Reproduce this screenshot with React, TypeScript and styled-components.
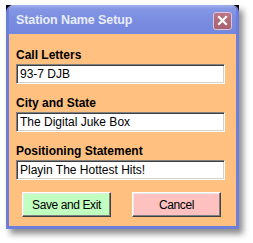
import React from "react";
import styled, { createGlobalStyle } from "styled-components";

const Global = createGlobalStyle`
  html, body { margin: 0; padding: 0; background: #ffffff; }
  body { font-family: "Liberation Sans", Arial, sans-serif; }
`;

const Page = styled.div`
  padding: 5px 0 0 6px;
  width: 253px;
  height: 243px;
  box-sizing: border-box;
`;

const Window = styled.div`
  width: 233px;
  background: linear-gradient(#000 0, #000 10px, transparent 10px);
  box-shadow: 4px 5px 6px rgba(0, 0, 0, 0.45);
`;

const Frame = styled.div`
  border: 3px solid #6c7fda;
  border-top: none;
  border-radius: 7px 7px 0 0;
  overflow: hidden;
  background: #ffc080;
`;

const TitleBar = styled.div`
  height: 29px;
  margin: 0 -3px;
  padding: 0 7px 0 10px;
  display: flex;
  align-items: center;
  justify-content: space-between;
  background: linear-gradient(#a3b0ef 0px, #8496e4 4px, #7b8de0 14px, #7487de 29px);
  border-radius: 7px 7px 0 0;
`;

const Title = styled.span`
  font-weight: bold;
  font-size: 12.5px;
  color: #e8ecfa;
  letter-spacing: -0.1px;
  margin-top: 1px;
`;

const CloseButton = styled.div`
  width: 17px;
  height: 16px;
  margin-top: 2px;
  border: 1px solid #d9c6dc;
  border-radius: 3px;
  background: linear-gradient(#bb7586, #a9606f);
  display: flex;
  align-items: center;
  justify-content: center;
`;

const Body = styled.div`
  padding: 14px 8px 9px 7px;
  display: flex;
  flex-direction: column;
`;

const Field = styled.div<{ $gap: number }>`
  display: flex;
  flex-direction: column;
  gap: 2px;
  margin-bottom: ${(p) => p.$gap}px;
`;

const Label = styled.div`
  font-weight: bold;
  font-size: 12px;
  line-height: 14px;
  color: #000;
`;

const Input = styled.div`
  width: 209px;
  height: 20px;
  box-sizing: border-box;
  border-style: solid;
  border-width: 1px;
  border-color: #808080 #ffffff #ffffff #808080;
  box-shadow: inset 1px 1px 0 #404040, inset -1px -1px 0 #d4d0c8;
  background: #fff;
  font-size: 12px;
  color: #000;
  padding-left: 3px;
  display: flex;
  align-items: center;
`;

const ButtonRow = styled.div`
  display: flex;
  gap: 21px;
  padding-left: 6px;
`;

const Button = styled.div<{ $bg: string }>`
  width: 89px;
  height: 25px;
  box-sizing: border-box;
  background: ${(p) => p.$bg};
  border-style: solid;
  border-width: 1px;
  border-color: #ffffff #404040 #404040 #ffffff;
  box-shadow: inset -1px -1px 0 #808080, inset 1px 1px 0 #e8e8e8;
  display: flex;
  align-items: center;
  justify-content: center;
  font-size: 12px;
  letter-spacing: -0.4px;
  color: #000;
`;

export default function App() {
  return (
    <Page>
      <Global />
      <Window>
        <Frame>
          <TitleBar>
            <Title>Station Name Setup</Title>
            <CloseButton>
              <svg width="11" height="11" viewBox="0 0 11 11">
                <path d="M2 2 L9 9 M9 2 L2 9" stroke="#fff" strokeWidth="2.2" strokeLinecap="square" />
              </svg>
            </CloseButton>
          </TitleBar>
          <Body>
            <Field $gap={12}>
              <Label>Call Letters</Label>
              <Input>93-7 DJB</Input>
            </Field>
            <Field $gap={12}>
              <Label>City and State</Label>
              <Input>The Digital Juke Box</Input>
            </Field>
            <Field $gap={12}>
              <Label>Positioning Statement</Label>
              <Input>Playin The Hottest Hits!</Input>
            </Field>
            <ButtonRow>
              <Button $bg="#c0ffc0">Save and Exit</Button>
              <Button $bg="#ffc0c0">Cancel</Button>
            </ButtonRow>
          </Body>
        </Frame>
      </Window>
    </Page>
  );
}
